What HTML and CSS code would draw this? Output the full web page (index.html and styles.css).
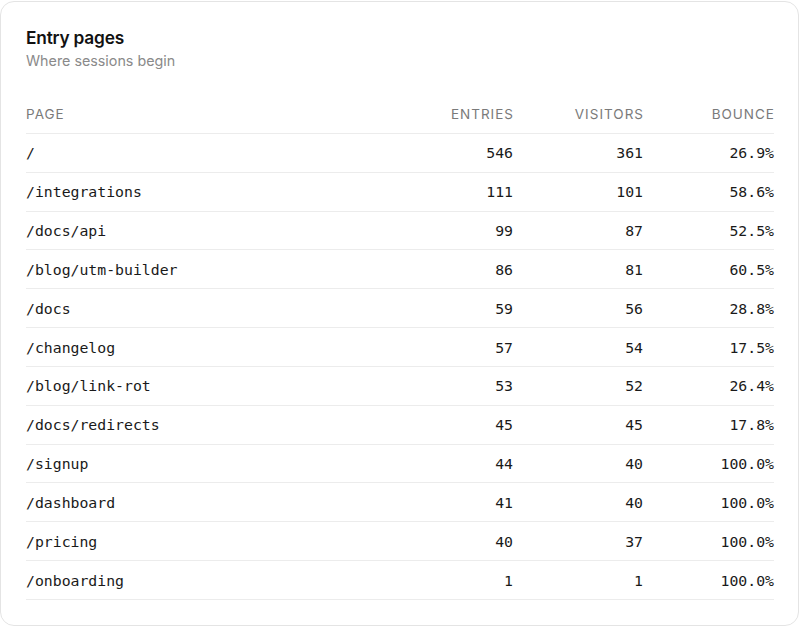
FILE: index.html
```html
<!DOCTYPE html>
<html>
<head>
<meta charset="utf-8">
<link rel="stylesheet" href="styles.css">
</head>
<body>
<div class="card">
  <div class="head">
    <h1 class="title">Entry pages</h1>
    <p class="subtitle">Where sessions begin</p>
  </div>
  <div class="table">
    <div class="row hdr"><div>Page</div><div class="num">Entries</div><div class="num">Visitors</div><div class="num">Bounce</div></div>
    <div class="row"><div>/</div><div class="num">546</div><div class="num">361</div><div class="num">26.9%</div></div>
    <div class="row"><div>/integrations</div><div class="num">111</div><div class="num">101</div><div class="num">58.6%</div></div>
    <div class="row"><div>/docs/api</div><div class="num">99</div><div class="num">87</div><div class="num">52.5%</div></div>
    <div class="row"><div>/blog/utm-builder</div><div class="num">86</div><div class="num">81</div><div class="num">60.5%</div></div>
    <div class="row"><div>/docs</div><div class="num">59</div><div class="num">56</div><div class="num">28.8%</div></div>
    <div class="row"><div>/changelog</div><div class="num">57</div><div class="num">54</div><div class="num">17.5%</div></div>
    <div class="row"><div>/blog/link-rot</div><div class="num">53</div><div class="num">52</div><div class="num">26.4%</div></div>
    <div class="row"><div>/docs/redirects</div><div class="num">45</div><div class="num">45</div><div class="num">17.8%</div></div>
    <div class="row"><div>/signup</div><div class="num">44</div><div class="num">40</div><div class="num">100.0%</div></div>
    <div class="row"><div>/dashboard</div><div class="num">41</div><div class="num">40</div><div class="num">100.0%</div></div>
    <div class="row"><div>/pricing</div><div class="num">40</div><div class="num">37</div><div class="num">100.0%</div></div>
    <div class="row"><div>/onboarding</div><div class="num">1</div><div class="num">1</div><div class="num">100.0%</div></div>
  </div>
</div>
</body>
</html>
```

FILE: styles.css
```css
html, body {
  margin: 0;
  padding: 0;
  background: #ffffff;
}
body {
  padding-top: 1px;
  font-family: Inter, "Noto Sans", sans-serif;
  color: #111111;
}
.card {
  box-sizing: border-box;
  width: 799px;
  height: 625px;
  border: 1px solid #e4e4e4;
  border-radius: 14px;
  padding: 24px 24px 0 25px;
  background: #fff;
}
.title {
  margin: 0;
  font-size: 17.3px;
  line-height: 24px;
  font-weight: 600;
  letter-spacing: -0.2px;
  color: #111;
}
.subtitle {
  margin: 0;
  font-size: 14.3px;
  line-height: 22px;
  color: #8a8a8a;
}
.table {
  margin-top: 24px;
}
.row {
  display: grid;
  grid-template-columns: 1fr 130px 130px 131px;
  align-items: center;
  box-sizing: border-box;
  height: 38.83px;
  border-bottom: 1px solid #ececec;
  font-family: "DejaVu Sans Mono", "Liberation Mono", monospace;
  font-size: 14.8px;
  color: #1a1a1a;
}
.row.hdr {
  height: 38px;
  font-family: Inter, "Noto Sans", sans-serif;
  font-size: 13.5px;
  letter-spacing: 1px;
  text-transform: uppercase;
  color: #7a7a7a;
  padding-bottom: 1px;
}
.row.hdr .num {
  margin-right: -1px;
}
.num {
  text-align: right;
}
```
